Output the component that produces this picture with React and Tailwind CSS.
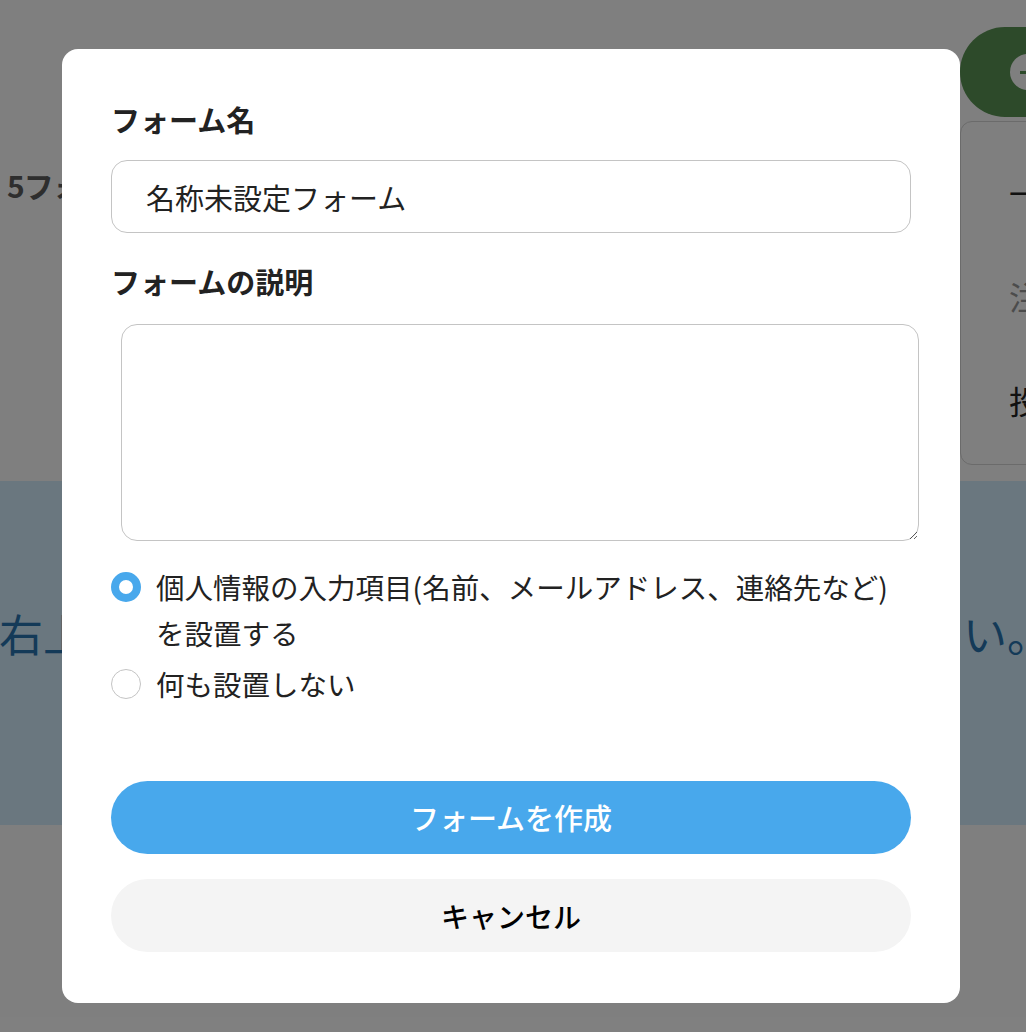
import React from 'react';

const font = { fontFamily: '"Noto Sans CJK JP", "Noto Sans", sans-serif' };

const Radio = ({ checked, children }) => (
  <label className="flex items-start gap-[15px] cursor-pointer">
    <span
      className={`mt-[8px] shrink-0 w-[30px] h-[30px] rounded-full bg-white ${
        checked ? 'border-[8px] border-[#48a8ec]' : 'border border-[#c4c4c4]'
      }`}
    />
    <span className="text-[28.5px] leading-[46px] text-[#222]">{children}</span>
  </label>
);

const BackgroundPage = () => (
  <div className="w-[1026px] h-[1032px] bg-white overflow-hidden">
    <div className="grid grid-cols-[960px_1fr] h-[481px]">
      <div className="pt-[163px] pl-[7px]">
        <p className="text-[30px] font-bold tracking-[-1px] text-[#5c5c5c]">5フォーム</p>
      </div>
      <div className="pt-[27px] flex flex-col gap-[4px] w-[300px]">
        <div className="h-[90px] rounded-full bg-[#5a9454] flex items-center pl-[50px]">
          <span className="w-[36px] h-[36px] rounded-full bg-white flex items-center justify-center">
            <span className="w-[16px] h-[3px] bg-[#5a9454]" />
          </span>
        </div>
        <div className="h-[344px] rounded-[12px] border border-[#d6d6d6] bg-white pl-[48px] pt-[48px] flex flex-col gap-[60px] text-[32px]">
          <p className="text-[#222] leading-[44px]">一覧</p>
          <p className="text-[#999] leading-[44px]">注意</p>
          <p className="text-[#222] leading-[44px]">投稿</p>
        </div>
      </div>
    </div>
    <div className="h-[344px] bg-[#d4eeff] flex items-center justify-center pb-[40px] pl-[24px]">
      <p className="whitespace-nowrap text-[44px] text-[#2874b0]">右上のボタンからフォームを新規作成してください。</p>
    </div>
  </div>
);

export default function App() {
  return (
    <div className="relative w-[1026px] h-[1032px] overflow-hidden" style={font}>
      <BackgroundPage />
      <div className="absolute inset-0 bg-black/50 pl-[62px] pt-[49px]">
        <div className="w-[898px] h-[954px] bg-white rounded-[16px] px-[49px] pt-[50px] flex flex-col">
          <h2 className="text-[29px] leading-[40px] font-bold text-[#222]">フォーム名</h2>
          <input
            readOnly
            value="名称未設定フォーム"
            className="mt-[21px] h-[73px] w-full rounded-[16px] border border-[#c4c4c4] px-[34px] text-[29px] text-[#222] outline-none"
          />
          <h2 className="mt-[28px] text-[29px] leading-[40px] font-bold text-[#222]">フォームの説明</h2>
          <textarea className="mt-[23px] ml-[10px] w-[798px] h-[217px] shrink-0 rounded-[16px] border border-[#c4c4c4] outline-none" />
          <div className="mt-[23px] flex flex-col gap-[5px]">
            <Radio checked>個人情報の入力項目(名前、メールアドレス、連絡先など)を設置する</Radio>
            <Radio>何も設置しない</Radio>
          </div>
          <button className="mt-[74px] h-[73px] w-full rounded-full bg-[#48a8ec] text-white text-[29px] font-medium">
            フォームを作成
          </button>
          <button className="mt-[25px] h-[73px] w-full rounded-full bg-[#f4f4f4] text-black text-[28px] font-medium">
            キャンセル
          </button>
        </div>
      </div>
    </div>
  );
}
